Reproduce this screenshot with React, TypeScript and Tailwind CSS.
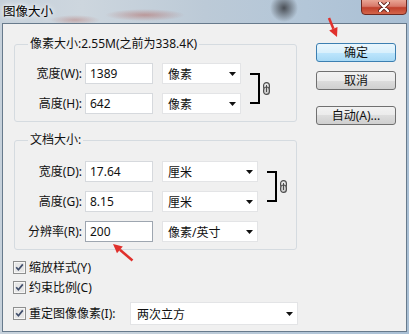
import React from "react";

const F = "font-['Noto_Sans','Noto_Sans_CJK_SC',sans-serif]";

function Caret() {
  return (
    <svg width="7" height="4" viewBox="0 0 7 4" className="shrink-0">
      <path d="M0 0H7L3.5 4Z" fill="#111" />
    </svg>
  );
}

function LinkIcon() {
  return (
    <svg width="7" height="13" viewBox="0 0 7 13" className="shrink-0">
      <rect x="0.6" y="0.6" width="5.8" height="7.4" rx="2.9" fill="#e8e8e8" stroke="#4d4d4d" strokeWidth="1.2" />
      <rect x="0.6" y="5" width="5.8" height="7.4" rx="2.9" fill="#d0d0d0" stroke="#4d4d4d" strokeWidth="1.2" />
      <line x1="3.5" y1="3" x2="3.5" y2="10" stroke="#4d4d4d" strokeWidth="1" />
    </svg>
  );
}

function CheckBox() {
  return (
    <svg width="13" height="13" viewBox="0 0 13 13" className="shrink-0">
      <rect x="0.5" y="0.5" width="12" height="12" fill="#f6f6f6" stroke="#8e8f8f" />
      <rect x="2" y="2" width="9" height="9" fill="#e6e6e6" />
      <path d="M3.2 6.3L5.4 8.8L9.8 3.4" fill="none" stroke="#3f4d6b" strokeWidth="1.7" />
    </svg>
  );
}

function TextBox({ value, focused }: { value: string; focused?: boolean }) {
  return (
    <div
      className={
        focused
          ? "h-[21px] w-[68px] shrink-0 bg-white border border-[#9ea6b0] pl-[4px] flex items-center text-[12px] leading-[16px] text-[#111]"
          : "h-[21px] w-[68px] shrink-0 bg-white border border-[#d6d9dd] pl-[4px] flex items-center text-[12px] leading-[16px] text-[#111]"
      }
    >
      {value}
    </div>
  );
}

function Select({ value, w }: { value: string; w: string }) {
  return (
    <div
      className={
        w +
        " h-[21px] shrink-0 bg-white border border-[#e3e4e6] pl-[5px] pr-[4px] flex items-center justify-between text-[12px] leading-[16px] text-[#111]"
      }
    >
      <span className="pt-[2px]">{value}</span>
      <Caret />
    </div>
  );
}

function Row({
  label,
  value,
  unit,
  selW,
  focused,
}: {
  label: string;
  value: string;
  unit: string;
  selW: string;
  focused?: boolean;
}) {
  return (
    <div className="flex items-center h-[21px]">
      <span className="w-[67px] shrink-0 text-right text-[12px] leading-[16px] whitespace-nowrap">{label}</span>
      <div className="ml-[3px]">
        <TextBox value={value} focused={focused} />
      </div>
      <div className="ml-[9px]">
        <Select value={unit} w={selW} />
      </div>
    </div>
  );
}

function Bracket() {
  return (
    <div className="flex items-center ml-[9px]">
      <div className="w-[10px] h-[31px] border-t-2 border-r-2 border-b-2 border-black" />
      <div className="ml-[3px]">
        <LinkIcon />
      </div>
    </div>
  );
}

function Button({ children, primary }: { children: React.ReactNode; primary?: boolean }) {
  return (
    <button
      className={
        primary
          ? "w-[80px] h-[19px] rounded-[3px] border border-[#3c7fb1] bg-[linear-gradient(180deg,#eaf6fd_0%,#d9f0fc_50%,#bee6fd_50%,#a7d9f5_100%)] text-[12px] leading-[16px] text-[#111] flex items-center justify-center"
          : "w-[80px] h-[19px] rounded-[3px] border border-[#707070] bg-[linear-gradient(180deg,#f2f2f2_0%,#ebebeb_50%,#dddddd_50%,#cfcfcf_100%)] text-[12px] leading-[16px] text-[#111] flex items-center justify-center"
      }
    >
      {children}
    </button>
  );
}

export default function App() {
  return (
    <div
      className={
        F +
        " relative w-[409px] h-[334px] overflow-hidden text-[#111] bg-[radial-gradient(ellipse_14px_14px_at_284px_8px,#4a4f56,transparent),radial-gradient(ellipse_40px_6px_at_145px_15px,rgba(175,85,75,0.45),transparent),radial-gradient(ellipse_25px_5px_at_75px_20px,rgba(175,85,75,0.35),transparent),linear-gradient(90deg,#c6d1db_0%,#cdd6de_20%,#bccad7_50%,#b3c6d8_75%,#a9bfd4_100%)]"
      }
    >
      {/* title bar */}
      <div className="h-[23px] flex items-start justify-between">
        <span className="ml-[3px] mt-[3px] text-[12.5px] leading-[17px] text-black [text-shadow:0_0_4px_#fff,0_0_7px_#fff]">
          图像大小
        </span>
        <div className="mr-[2px] -mt-[1px] w-[46px] h-[16px] rounded-b-[4px] border border-[#6e2a22] bg-[linear-gradient(180deg,#e9a595_0%,#d8796a_45%,#c0402c_55%,#d4664b_100%)] flex items-center justify-center">
          <svg width="12" height="10" viewBox="0 0 12 10">
            <path d="M2 1L10 9M10 1L2 9" stroke="#5a1d17" strokeWidth="4" strokeLinecap="round" />
            <path d="M2 1L10 9M10 1L2 9" stroke="#ffffff" strokeWidth="2.4" strokeLinecap="round" />
          </svg>
        </div>
      </div>

      {/* body */}
      <div className="mx-[2px] w-[405px] h-[309px] border border-[#677a8c] bg-[#f0f0f0] flex">
        {/* left column */}
        <div className="pl-[11px] flex flex-col">
          <fieldset className="mt-[12px] w-[283px] border border-[#d5dbe0] rounded-[3px] pb-[7px]">
            <legend className="ml-[13px] px-[2px] text-[12px] leading-[16px]">像素大小:2.55M(之前为338.4K)</legend>
            <div className="pt-[11px] flex items-center">
              <div className="flex flex-col gap-[9px]">
                <Row label="宽度(W):" value="1389" unit="像素" selW="w-[79px]" />
                <Row label="高度(H):" value="642" unit="像素" selW="w-[79px]" />
              </div>
              <Bracket />
            </div>
          </fieldset>

          <fieldset className="mt-[10px] w-[283px] border border-[#d5dbe0] rounded-[3px] pb-[7px]">
            <legend className="ml-[13px] px-[2px] text-[12px] leading-[16px]">文档大小:</legend>
            <div className="pt-[13px] flex flex-col gap-[9px]">
              <div className="flex items-center">
                <div className="flex flex-col gap-[9px]">
                  <Row label="宽度(D):" value="17.64" unit="厘米" selW="w-[96px]" />
                  <Row label="高度(G):" value="8.15" unit="厘米" selW="w-[96px]" />
                </div>
                <Bracket />
              </div>
              <Row label="分辨率(R):" value="200" unit="像素/英寸" selW="w-[96px]" focused />
            </div>
          </fieldset>

          <div className="-ml-[1px] mt-[9px] h-[17px] flex items-center">
            <CheckBox />
            <span className="ml-[3px] text-[12px] leading-[16px]">缩放样式(Y)</span>
          </div>
          <div className="-ml-[1px] mt-[3px] h-[17px] flex items-center">
            <CheckBox />
            <span className="ml-[3px] text-[12px] leading-[16px]">约束比例(C)</span>
          </div>
          <div className="-ml-[1px] mt-[6px] h-[23px] flex items-center">
            <CheckBox />
            <span className="ml-[3px] w-[101px] text-[12px] leading-[16px] whitespace-nowrap">重定图像像素(I):</span>
            <div className="w-[168px] h-[23px] bg-white border border-[#e3e4e6] pl-[6px] pr-[4px] flex items-center justify-between text-[12px] leading-[16px]">
              <span className="pt-[2px]">两次立方</span>
              <Caret />
            </div>
          </div>
        </div>

        {/* right column */}
        <div className="ml-[18px] mt-[19px] flex flex-col">
          <Button primary>确定</Button>
          <div className="mt-[9px]">
            <Button>取消</Button>
          </div>
          <div className="mt-[16px]">
            <Button>自动(A)...</Button>
          </div>
        </div>
      </div>

      {/* red annotation arrows */}
      <svg className="absolute left-0 top-0 pointer-events-none" width="409" height="334" viewBox="0 0 409 334">
        <line x1="329" y1="18" x2="333.4" y2="28.8" stroke="#e0302c" strokeWidth="2.5" />
        <polygon points="337,37 329.2,30.6 337.5,26.9" fill="#e0302c" />
        <line x1="132.5" y1="260.5" x2="119.9" y2="249.8" stroke="#e0302c" strokeWidth="2.5" />
        <polygon points="113,244 122.8,246.4 117,253.3" fill="#e0302c" />
      </svg>
    </div>
  );
}
